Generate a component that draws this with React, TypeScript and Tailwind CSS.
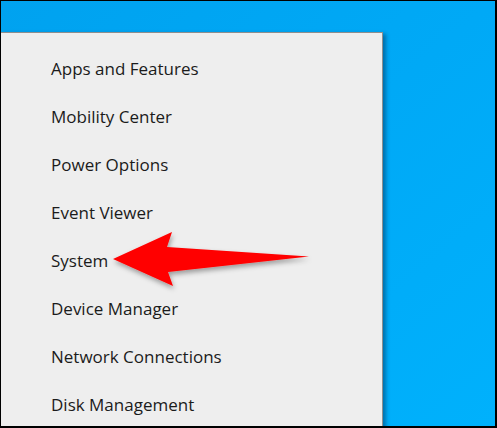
import React from 'react';

const items = [
  'Apps and Features',
  'Mobility Center',
  'Power Options',
  'Event Viewer',
  'System',
  'Device Manager',
  'Network Connections',
  'Disk Management',
];

export default function App() {
  return (
    <div className="relative w-[497px] h-[428px] overflow-hidden border-l border-t border-r-2 border-b-2 border-black bg-gradient-to-br from-[#00a2ef] via-[#00a9f6] to-[#00b1fc]">
      <div className="pt-[31px]">
        <div
          className="w-[382px] h-[400px] bg-[#eeeeee] border-t border-r border-[#8e8e8e] shadow-[3px_2px_4px_rgba(0,40,80,0.45)] pt-[12px]"
          style={{ fontFamily: '"Open Sans", "Noto Sans", sans-serif' }}
        >
          {items.map((label) => (
            <div key={label} className="h-12 flex items-center pl-[50px] text-[17px] text-[#1b1b1b]">
              {label}
            </div>
          ))}
        </div>
      </div>

      {/* red arrow pointing at System */}
      <svg className="absolute left-[-1px] top-[-1px]" width="497" height="428" viewBox="0 0 497 428">
        <defs>
          <filter id="arrowShadow" x="-10%" y="-20%" width="130%" height="160%">
            <feDropShadow dx="1" dy="3" stdDeviation="2.5" floodColor="#000" floodOpacity="0.35" />
          </filter>
        </defs>
        <polygon
          points="113,259 172,232 167,247 309,256.5 168,272 173,286"
          fill="#ff0000"
          filter="url(#arrowShadow)"
        />
      </svg>
    </div>
  );
}
